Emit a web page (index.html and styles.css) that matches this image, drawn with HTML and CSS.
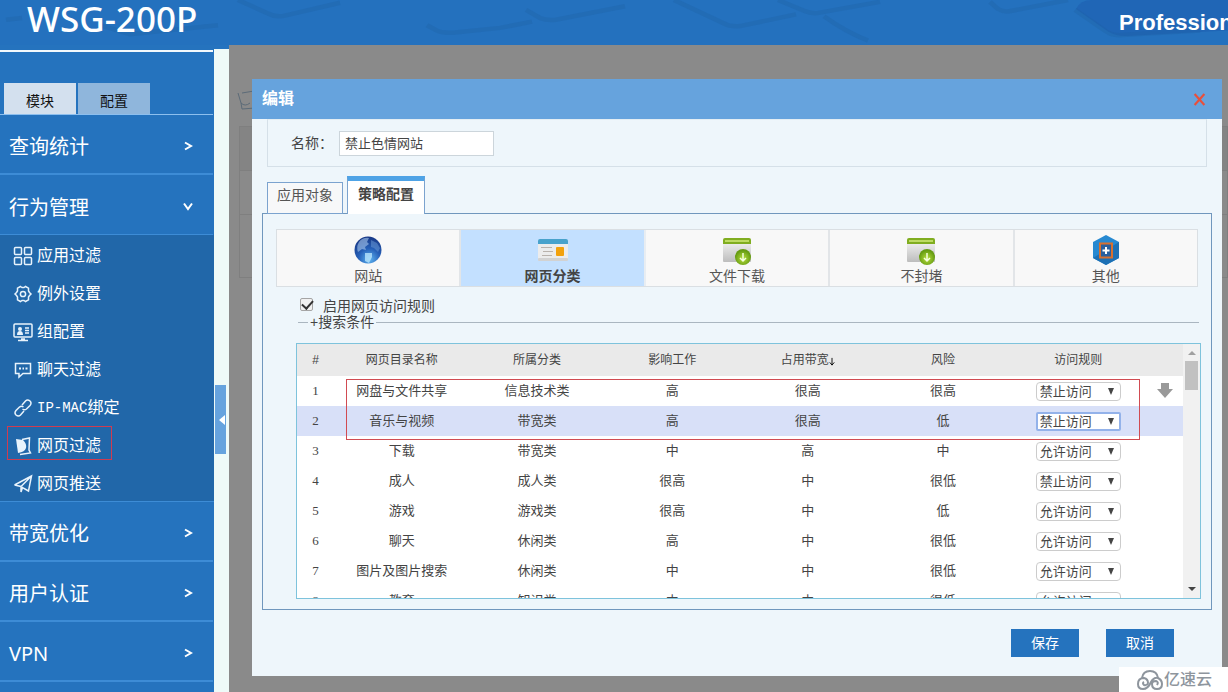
FILE: index.html
```html
<!DOCTYPE html>
<html lang="zh-CN">
<head>
<meta charset="utf-8">
<title>WSG-200P</title>
<link rel="stylesheet" href="styles.css">
</head>
<body>
<header class="topbar">
  <svg class="topbar-art" viewBox="0 0 1228 50" preserveAspectRatio="none" aria-hidden="true">
    <path class="key-fill" d="M1076 10Q1080 0 1092 0H1228V34L1126 40Q1116 40 1108 35Z"/>
    <g class="key-edge">
      <path d="M238 0L268 15Q276 20 286 17L340 3"/>
      <path d="M427 28L437 34Q442 37 455 36L500 31L532 24"/>
      <path d="M526 11L540 20Q546 23 556 22L625 7"/>
      <path d="M674 0L724 26Q730 30 740 29L796 16"/>
      <path d="M778 0L804 12Q812 16 820 14L880 2"/>
      <path d="M824 18Q845 35 868 45"/>
      <path d="M990 2L998 10Q1004 14 1012 12L1068 0"/>
      <path d="M1075 11L1105 34Q1112 40 1122 39L1200 34"/>
      <path d="M100 28L130 38L218 28"/>
      <path d="M6 22L22 20"/>
    </g>
  </svg>
  <h1 class="brand">WSG-200P</h1>
  <span class="edition">Professional</span>
</header>

<div class="layout">
  <aside class="sidebar">
    <div class="modes">
      <button class="mode mode-on" type="button">模块</button>
      <button class="mode" type="button">配置</button>
    </div>
    <nav class="menu">
      <a class="group" href="#stat">查询统计<svg class="chev" viewBox="0 0 10 10"><path d="M2 1.500L8 5L2 8.500"/></svg></a>
      <a class="group group-open" href="#behavior">行为管理<svg class="chev" viewBox="0 0 10 10"><path d="M1 1.500L5 7L9 1.500"/></svg></a>
      <div class="submenu">
        <a class="item" href="#app"><svg class="ico" viewBox="0 0 20 20"><rect x="1.500" y="1.500" width="7" height="7" rx="1"/><rect x="11.500" y="1.500" width="7" height="7" rx="1"/><rect x="1.500" y="11.500" width="7" height="7" rx="1"/><rect x="11.500" y="11.500" width="7" height="7" rx="1"/></svg>应用过滤</a>
        <a class="item" href="#except"><svg class="ico" viewBox="0 0 20 20"><path d="M7.500 2.500L9 3.500H11L12.500 2.500L15.500 4.200V7L16.500 8.500L18 10L16.500 11.500L15.500 13V15.800L12.500 17.500L11 16.500H9L7.500 17.500L4.500 15.800V13L3.500 11.500L2 10L3.500 8.500L4.500 7V4.200Z"/><circle cx="10" cy="10" r="2.600"/></svg>例外设置</a>
        <a class="item" href="#group"><svg class="ico" viewBox="0 0 20 20"><rect x="1" y="2" width="18" height="13" rx="1"/><path d="M4 13Q4 9 7 9Q10 9 10 13Z" class="solid"/><circle cx="7" cy="7" r="2" class="solid"/><path d="M12 6H16M12 8.500H16M12 11H16M5 18.500H15M8 17H12"/></svg>组配置</a>
        <a class="item" href="#chat"><svg class="ico" viewBox="0 0 20 20"><path d="M2.500 3.500H17.500V13.500H10L6 17V13.500H2.500Z"/><path d="M6 8.500H8M9.500 8.500H11M12.500 8.500H14.500" class="bold"/></svg>聊天过滤</a>
        <a class="item" href="#ipmac"><svg class="ico" viewBox="0 0 20 20"><path d="M9 7L12.500 3Q14.500 1 17 3Q19 5 17 7.500L13.500 11Q11.500 12.500 9.500 11M11 13L7.500 17Q5.500 19 3 17Q1 15 3 12.500L6.500 9Q8.500 7.500 10.500 9"/></svg><span class="latin">IP-MAC</span>绑定</a>
        <a class="item item-marked" href="#web"><svg class="ico" viewBox="0 0 20 20"><path d="M9 3.500L16.500 2L16 14L17.500 17L7 18.500"/><path class="solid" d="M3 3L10 4Q14 8 13 12Q12 16 5 17Z"/></svg>网页过滤</a>
        <a class="item" href="#push"><svg class="ico" viewBox="0 0 20 20"><path d="M1.500 11L18.500 2L15.500 17L9.500 13.500L8 18V12.500L18.500 2M1.500 11L8 12.500"/></svg>网页推送</a>
      </div>
      <a class="group" href="#bandwidth">带宽优化<svg class="chev" viewBox="0 0 10 10"><path d="M2 1.500L8 5L2 8.500"/></svg></a>
      <a class="group" href="#auth">用户认证<svg class="chev" viewBox="0 0 10 10"><path d="M2 1.500L8 5L2 8.500"/></svg></a>
      <a class="group" href="#vpn">VPN<svg class="chev" viewBox="0 0 10 10"><path d="M2 1.500L8 5L2 8.500"/></svg></a>
    </nav>
  </aside>

  <div class="gutter">
    <button class="collapse" type="button" aria-label="收起菜单"><svg viewBox="0 0 6 10"><path d="M6 0V10L0 5Z"/></svg></button>
  </div>

  <main class="stage">
    <div class="behind" aria-hidden="true">
      <svg class="behind-icon" viewBox="0 0 20 20"><path d="M5 3L17 1L16 15L18 18L5 19L4 13Q8 17 13 13M1 3L4 13"/></svg>
      <div class="behind-table"><i></i><i></i><i></i></div>
    </div>

    <section class="dialog" role="dialog" aria-labelledby="dlg-title">
      <div class="dialog-head">
        <h2 id="dlg-title">编辑</h2>
        <button class="close" type="button" aria-label="关闭"><svg viewBox="0 0 12 12"><path d="M1.500 1L10.500 11M10.500 1L1.500 11"/></svg></button>
      </div>
      <div class="dialog-body">
        <div class="name-row">
          <label for="rule-name">名称：</label>
          <input id="rule-name" class="name-input" type="text" value="禁止色情网站">
        </div>

        <div class="tabs">
          <button class="tab" type="button">应用对象</button>
          <button class="tab tab-on" type="button">策略配置</button>
        </div>

        <div class="panel">
          <div class="cards">
            <button class="card" type="button">
              <svg class="card-ico" viewBox="0 0 30 30"><defs><radialGradient id="globe" cx="0.550" cy="0.850" r="0.900"><stop offset="0" stop-color="#5fb4f0"/><stop offset="0.450" stop-color="#2660b8"/><stop offset="1" stop-color="#16327e"/></radialGradient></defs><circle cx="15" cy="15" r="13.500" fill="url(#globe)"/><path d="M6 7Q10 2 16 3L14 7L16 9L12 12L13 15L9 14L5 17Q3 12 6 7Z" fill="#a9c8ec" opacity=".6"/><path d="M18 5L24 8L27 13L25 17L21 13L18 12Z" fill="#6c9bd8" opacity=".5"/><path d="M12 18L19 18L19 22L16 28L12 26Z" fill="#b8e4fb" opacity=".8"/></svg>
              网站
            </button>
            <button class="card card-on" type="button">
              <svg class="card-ico" viewBox="0 0 30 30"><rect x="0" y="5" width="30" height="21" rx="2" fill="#ececec"/><path d="M0 9V6Q0 4 2 4H28Q30 4 30 6V9Z" fill="#48a2cc"/><rect y="23" width="30" height="3" rx="1" fill="#d2d2d2"/><path d="M3 12.500H14M5 16.500H15M4 20.500H14" stroke="#b9b2ac"/><rect x="18" y="12" width="8" height="9" rx="1" fill="#f2a10c"/></svg>
              网页分类
            </button>
            <button class="card" type="button">
              <svg class="card-ico" viewBox="0 0 30 30"><defs><linearGradient id="win" x2="0" y2="1"><stop stop-color="#f7f7f7"/><stop offset="1" stop-color="#bdbdbd"/></linearGradient><radialGradient id="ball" cx=".5" cy=".6"><stop stop-color="#b9e03e"/><stop offset="1" stop-color="#669c12"/></radialGradient></defs><rect x="1" y="4" width="28" height="23" rx="1" fill="url(#win)"/><path d="M1 9V5Q1 3 3 3H27Q29 3 29 5V9Z" fill="#80ad20"/><path d="M3 5H27V7H3Z" fill="#bddb63"/><circle cx="21" cy="22" r="8" fill="url(#ball)"/><path d="M21 18V26M18 23L21 26L24 23" fill="none" stroke="#f5ffe0" stroke-width="1.500"/></svg>
              文件下载
            </button>
            <button class="card" type="button">
              <svg class="card-ico" viewBox="0 0 30 30"><rect x="1" y="4" width="28" height="23" rx="1" fill="url(#win)"/><path d="M1 9V5Q1 3 3 3H27Q29 3 29 5V9Z" fill="#80ad20"/><path d="M3 5H27V7H3Z" fill="#bddb63"/><circle cx="21" cy="22" r="8" fill="url(#ball)"/><path d="M21 18V26M18 23L21 26L24 23" fill="none" stroke="#f5ffe0" stroke-width="1.500"/></svg>
              不封堵
            </button>
            <button class="card" type="button">
              <svg class="card-ico" viewBox="0 0 30 30"><path d="M15 0L28 7V23L15 30L2 23V7Z" fill="#2789d1"/><path d="M2 23L28 7V23L15 30Z" fill="#1d70b4"/><rect x="9" y="8.500" width="12" height="14" fill="#285f9e" stroke="#d7702f" stroke-width="2"/><path d="M15 12V19M11.500 15.500H18.500" stroke="#fff" stroke-width="2"/></svg>
              其他
            </button>
          </div>

          <div class="enable">
            <input id="enable-rule" type="checkbox" class="check" checked>
            <label for="enable-rule">启用网页访问规则</label>
          </div>
          <div class="search-line"><span>+搜索条件</span></div>

          <div class="grid-box">
            <div class="grid-view">
              <table class="grid">
                <colgroup><col class="c-edge"><col><col><col><col><col><col><col class="c-edge"></colgroup>
                <thead><tr><th>#</th><th>网页目录名称</th><th>所属分类</th><th>影响工作</th><th>占用带宽<svg class="sort" viewBox="0 0 6 10"><path d="M3 1V9M.5 6L3 9L5.500 6"/></svg></th><th>风险</th><th>访问规则</th><th></th></tr></thead>
                <tbody>
                  <tr><td>1</td><td>网盘与文件共享</td><td>信息技术类</td><td>高</td><td>很高</td><td>很高</td><td><select class="rule" aria-label="访问规则 1"><option>禁止访问</option><option>允许访问</option></select></td><td class="move"><svg viewBox="0 0 16 18"><path d="M4 1H12V7H16L8 16L0 7H4Z"/></svg></td></tr>
                  <tr class="row-on"><td>2</td><td>音乐与视频</td><td>带宽类</td><td>高</td><td>很高</td><td>低</td><td><select class="rule rule-focus" aria-label="访问规则 2"><option>禁止访问</option><option>允许访问</option></select></td><td></td></tr>
                  <tr><td>3</td><td>下载</td><td>带宽类</td><td>中</td><td>高</td><td>中</td><td><select class="rule" aria-label="访问规则 3"><option>允许访问</option><option>禁止访问</option></select></td><td></td></tr>
                  <tr><td>4</td><td>成人</td><td>成人类</td><td>很高</td><td>中</td><td>很低</td><td><select class="rule" aria-label="访问规则 4"><option>禁止访问</option><option>允许访问</option></select></td><td></td></tr>
                  <tr><td>5</td><td>游戏</td><td>游戏类</td><td>很高</td><td>中</td><td>低</td><td><select class="rule" aria-label="访问规则 5"><option>允许访问</option><option>禁止访问</option></select></td><td></td></tr>
                  <tr><td>6</td><td>聊天</td><td>休闲类</td><td>高</td><td>中</td><td>很低</td><td><select class="rule" aria-label="访问规则 6"><option>允许访问</option><option>禁止访问</option></select></td><td></td></tr>
                  <tr><td>7</td><td>图片及图片搜索</td><td>休闲类</td><td>中</td><td>中</td><td>很低</td><td><select class="rule" aria-label="访问规则 7"><option>允许访问</option><option>禁止访问</option></select></td><td></td></tr>
                  <tr><td>8</td><td>教育</td><td>知识类</td><td>中</td><td>中</td><td>很低</td><td><select class="rule" aria-label="访问规则 8"><option>允许访问</option><option>禁止访问</option></select></td><td></td></tr>
                </tbody>
              </table>
            </div>
            <div class="scroll" aria-hidden="true">
              <svg class="scroll-arrow up" viewBox="0 0 8 4"><path d="M0 4L4 0L8 4Z"/></svg>
              <div class="thumb"></div>
              <svg class="scroll-arrow down" viewBox="0 0 8 4"><path d="M0 0L4 4L8 0Z"/></svg>
            </div>
            <div class="highlight"></div>
          </div>
        </div>

        <div class="actions">
          <button class="btn" type="button">保存</button>
          <button class="btn" type="button">取消</button>
        </div>
      </div>
    </section>
  </main>
</div>

<div class="watermark">
  <svg viewBox="0 0 26 20"><path d="M5 8Q6 1 13 1Q20 1 21 8Q25 10 25 14Q25 19 20 19Q15 19 15 14Q15 11 19 11Q22 12 20 15M21 8Q17 7 14 12Q11 19 6 19Q1 19 1 14Q1 8 7 8Q11 9 11 13Q10 16 7 15Q5 13 7 12"/></svg>
  <span>亿速云</span>
</div>
</body>
</html>
```

FILE: styles.css
```css
* { box-sizing: border-box; }

body {
  margin: 0;
  height: 100vh;
  display: flex;
  flex-direction: column;
  overflow: hidden;
  background: #2573bf;
  color: #444;
  font: 14px/20px "Liberation Sans", "Noto Sans CJK SC", sans-serif;
}

button, input, select { font: inherit; color: inherit; margin: 0; }
button { cursor: pointer; border: 0; padding: 0; }
a { color: inherit; text-decoration: none; }
svg { display: block; flex: none; }

/* top bar */
.topbar {
  position: relative;
  flex: none;
  height: 45px;
  display: flex;
  justify-content: space-between;
  background: #2471be;
  color: #fff;
}
.topbar-art { position: absolute; inset: 0; width: 100%; height: 45px; }
.key-edge path { fill: none; stroke: #1f5fa3; stroke-width: 5; opacity: .3; }
.key-fill { fill: #2066b6; }
.brand {
  position: relative;
  margin: 0 0 0 27px;
  font: 500 35px/37px "Noto Sans", "Noto Sans CJK SC", sans-serif;
}
.edition {
  position: relative;
  width: 109px;
  white-space: nowrap;
  font-size: 22px;
  line-height: 45px;
  font-weight: bold;
}

.layout { flex: 1; min-height: 0; display: flex; }

/* sidebar */
.sidebar {
  position: relative;
  flex: none;
  width: 214px;
  padding-top: 5px;
  background: #2573be;
  color: #fff;
}
.modes {
  display: flex;
  gap: 2px;
  margin-right: 1px;
  padding: 31px 4px 0;
  border-top: 2px solid #f2f8fc;
  border-bottom: 1px solid #8dbfee;
}
.mode { width: 72px; height: 31px; padding-top: 4px; background: #8fb6dc; color: #111; }
.mode-on { background: #d3e0ee; }
.group {
  display: flex;
  align-items: center;
  justify-content: space-between;
  height: 60px;
  margin-right: 1px;
  padding: 6px 20px 0 9px;
  border-bottom: 2px solid #3d8cd6;
  font: 20px/30px "Noto Sans", "Noto Sans CJK SC", sans-serif;
}
.group-open { border-bottom-width: 1px; }
.chev { width: 10px; height: 10px; margin-bottom: 2px; fill: none; stroke: #fff; stroke-width: 2; }
.submenu { background: #2167a9; border-bottom: 1px solid #3d8cd6; }
.item {
  display: flex;
  align-items: center;
  gap: 4px;
  height: 38px;
  padding: 3px 0 0 13px;
  font-size: 16px;
}
.item-marked {
  position: relative;
}
.item-marked::after {
  content: "";
  position: absolute;
  left: 7px;
  top: 1px;
  width: 103px;
  height: 32px;
  border: 1px solid #d03c50;
}
.latin { font: 14px/20px "Liberation Mono", monospace; margin-right: -4px; }
.ico { width: 20px; height: 20px; fill: none; stroke: #e8f3fc; stroke-width: 1.500px; }
.solid { fill: #e8f3fc; stroke: none; }
.bold { stroke-width: 2px; }

.gutter {
  flex: none;
  width: 15px;
  margin-top: 4px;
  padding: 336px 3px 0 1px;
  background: #eefaf8;
}
.collapse {
  display: flex;
  align-items: center;
  justify-content: flex-end;
  width: 11px;
  height: 69px;
  padding-right: 1px;
  background: #66a3de;
}
.collapse svg { width: 6px; height: 10px; fill: #fff; }

/* dimmed page */
.stage {
  position: relative;
  flex: 1;
  min-width: 0;
  padding: 34px 6px 16px 23px;
  background: #8a8a8a;
}
.behind { position: absolute; inset: 0; }
.behind-icon {
  position: absolute;
  left: 8px;
  top: 45px;
  width: 20px;
  height: 20px;
  fill: none;
  stroke: #5c6b78;
  stroke-width: 1px;
}
.behind-table {
  position: absolute;
  left: 10px;
  right: 0;
  top: 81px;
  border: 1px solid #7f7f7f;
}
.behind-table i { display: block; height: 44px; border-bottom: 1px solid #7f7f7f; }
.behind-table i:first-child { background: #848484; }
.behind-table i:last-child { height: 62px; border-bottom: 0; }

/* dialog */
.dialog {
  position: relative;
  height: 100%;
  display: flex;
  flex-direction: column;
  background: #eef6fb;
}
.dialog-head {
  flex: none;
  height: 40px;
  display: flex;
  align-items: center;
  justify-content: space-between;
  padding: 0 16px 0 10px;
  background: #66a3dd;
  color: #fff;
}
.dialog-head h2 { margin: 0; font-size: 16px; line-height: 24px; }
.close { background: none; padding: 0; }
.close svg { width: 13px; height: 13px; stroke: #e8503c; stroke-width: 2px; }
.dialog-body { padding: 0 10px; }

.name-row {
  display: flex;
  align-items: center;
  gap: 7px;
  height: 48px;
  margin: 0 5px;
  padding-left: 23px;
  border: 1px solid #d5e0e8;
  border-top-color: #e3edf3;
}
.name-row label { width: 41px; white-space: nowrap; }
.name-input {
  width: 155px;
  height: 25px;
  padding: 0 5px 2px;
  border: 1px solid #ccd5db;
  background: #fff;
  font-size: 13px;
}

.tabs {
  position: relative;
  display: flex;
  align-items: flex-end;
  gap: 4px;
  margin: 9px 5px -1px;
}
.tab {
  width: 76px;
  height: 32px;
  padding-bottom: 6px;
  border: 1px solid #7ba3cf;
  background: #f7f8f9;
  color: #555;
}
.tab-on {
  width: 78px;
  height: 38px;
  border-top: 5px solid #4ea3e6;
  border-bottom: 0;
  padding-bottom: 8px;
  background: #fff;
  color: #444;
  font-weight: bold;
}

.panel { padding: 15px 10px 10px 13px; border: 1px solid #7097bd; }

.cards {
  display: flex;
  margin-right: 3px;
  border: 1px solid #dadfe3;
  background: #f8f8f8;
}
.card {
  flex: 1;
  display: flex;
  flex-direction: column;
  align-items: center;
  height: 56px;
  padding-top: 5px;
  background: none;
  color: #555;
}
.card + .card { border-left: 2px solid #e2e5e8; }
.card-on { background: #c3e0ff; color: #444; font-weight: bold; }
.card-on + .card { border-left-color: #e8edf2; }
.card-ico { width: 30px; height: 30px; margin-bottom: 1px; }

.enable { display: flex; align-items: center; gap: 10px; height: 20px; margin: 9px 0 0 24px; }
.check {
  appearance: none;
  width: 13px;
  height: 13px;
  margin-bottom: 4px;
  border: 1px solid #a5a5a5;
  border-radius: 2px;
  background: #f1f1f1;
}
.check:checked::after {
  content: "";
  display: block;
  width: 5px;
  height: 9px;
  margin: -1px 0 0 3px;
  border: solid #333;
  border-width: 0 2px 2px 0;
  transform: rotate(42deg);
}
.search-line {
  display: flex;
  align-items: center;
  gap: 2px;
  height: 16px;
  margin: -2px 2px 0 22px;
  line-height: 16px;
}
.search-line::before, .search-line::after { content: ""; height: 1px; background: #aab6c0; }
.search-line::before { width: 10px; }
.search-line::after { flex: 1; }

.grid-box {
  position: relative;
  display: flex;
  height: 256px;
  margin: 13px 0 0 20px;
  border: 1px solid #7ec3dc;
  background: #fff;
  overflow: hidden;
}
.grid-view { flex: 1; min-width: 0; overflow: hidden; }
.grid { width: 100%; table-layout: fixed; border-collapse: collapse; text-align: center; font-size: 13px; }
.c-edge { width: 37px; }
.grid th { height: 32px; padding: 0; background: #eaeaea; font-size: 12px; font-weight: normal; }
.grid td { height: 30px; padding: 0; line-height: 18px; }
.grid td:first-child { font-family: "Liberation Serif", serif; }
.row-on td { background: #d8e0f8; }
.sort { display: inline-block; width: 6px; height: 9px; fill: none; stroke: #000; stroke-width: 1px; vertical-align: -2px; }
.rule {
  appearance: none;
  display: block;
  width: 85px;
  height: 19px;
  margin: 1px auto 0;
  padding: 0 3px;
  border: 1px solid #ccc;
  border-radius: 4px;
  background: #fff;
  line-height: 17px;
}
.grid td:has(.rule) { position: relative; }
.grid td:has(.rule)::after {
  content: "";
  position: absolute;
  left: 50%;
  top: 12px;
  margin-left: 30px;
  border: solid transparent;
  border-width: 7px 3px 0;
  border-top-color: #444;
  pointer-events: none;
}
.rule-focus { border: 2px solid #93b2ea; border-radius: 2px; line-height: 15px; padding: 0 2px; }
.move svg { width: 16px; height: 18px; margin: 0 auto; fill: #999; }

.scroll {
  display: flex;
  flex-direction: column;
  align-items: center;
  width: 17px;
  padding: 7px 0;
  background: #f1f1f1;
}
.scroll-arrow { width: 8px; height: 4px; }
.up { fill: #a0a0a0; }
.down { fill: #444; margin-top: auto; }
.thumb { width: 13px; height: 29px; margin-top: 6px; background: #c1c1c1; }

.highlight {
  position: absolute;
  left: 49px;
  right: 60px;
  top: 35px;
  height: 61px;
  border: 1px solid #d14b52;
  pointer-events: none;
}

.actions { display: flex; justify-content: flex-end; gap: 27px; margin: 19px 38px 0 0; }
.btn { width: 68px; height: 28px; background: #2573be; color: #fff; }

.watermark {
  position: absolute;
  right: 0;
  bottom: 0;
  display: flex;
  align-items: center;
  gap: 1px;
  width: 109px;
  height: 25px;
  padding-left: 18px;
  background: #fff;
  color: #8e959d;
  font-size: 16px;
  font-weight: 500;
}
.watermark svg { width: 26px; height: 20px; fill: none; stroke: #8e959d; stroke-width: 2px; }
```
